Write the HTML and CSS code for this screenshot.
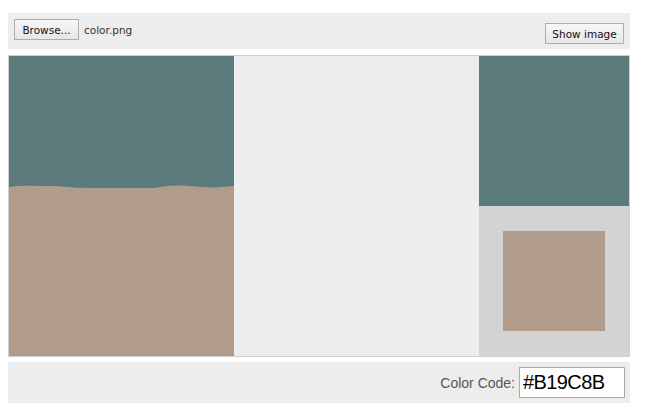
FILE: index.html
```html
<!DOCTYPE html>
<html lang="en">
<head>
    <meta charset="UTF-8">
    <title>Color Picker</title>
    <link rel="stylesheet" href="styles.css">
</head>
<body>
<div class="toolbar">
    <div class="file-group">
        <button class="btn">Browse...</button>
        <span class="file-name">color.png</span>
    </div>
    <button class="btn show-btn">Show image</button>
</div>

<div class="viewer">
    <div class="image-box">
        <svg width="225" height="300" viewBox="0 0 225 300">
            <rect width="225" height="300" fill="#5b7a7b"/>
            <path d="M0 131 C10 129 30 130 45 130 C60 131 70 132 85 132 L145 132 C155 130 165 129 180 130 C195 131 205 132 212 131 L225 130 L225 300 L0 300 Z" fill="#b19c8b"/>
        </svg>
    </div>
    <div class="spacer"></div>
    <div class="preview">
        <div class="preview-top"></div>
        <div class="preview-bottom">
            <div class="swatch"></div>
        </div>
    </div>
</div>

<div class="footer">
    <label class="code-label" for="colorCode">Color Code:</label>
    <input type="text" id="colorCode" class="code-input" value="#B19C8B">
</div>
</body>
</html>
```

FILE: styles.css
```css
body {
    margin: 8px;
    font-family: "Liberation Sans", Arial, sans-serif;
    background-color: #fff;
    color: #333;
}
.toolbar {
    margin-top: 5px;
    width: 622px;
    height: 36px;
    background-color: #ededed;
    display: flex;
    justify-content: space-between;
    box-sizing: border-box;
    padding: 6px 6px 5px 6px;
}
.file-group {
    display: flex;
    align-items: center;
    align-self: flex-start;
    gap: 5px;
}
.btn {
    width: 65px;
    height: 21px;
    padding: 0;
    font-family: "DejaVu Sans", sans-serif;
    font-size: 10.5px;
    color: #111;
    background: linear-gradient(#f7f7f7, #e6e6e6);
    border: 1px solid #adadad;
    border-radius: 0;
}
.show-btn {
    align-self: flex-end;
    width: 79px;
}
.file-name {
    font-family: "DejaVu Sans", sans-serif;
    font-size: 10.5px;
    color: #333;
}
.viewer {
    margin-top: 6px;
    width: 622px;
    height: 302px;
    box-sizing: border-box;
    border: 1px solid #cfcfcf;
    display: flex;
    background-color: #ededed;
}
.image-box {
    width: 225px;
    height: 300px;
}
.image-box svg {
    display: block;
}
.spacer {
    flex: 1;
}
.preview {
    width: 150px;
    display: flex;
    flex-direction: column;
}
.preview-top {
    height: 150px;
    background-color: #5b7a7b;
}
.preview-bottom {
    flex: 1;
    background-color: #d3d3d3;
    display: flex;
    align-items: center;
    justify-content: center;
}
.swatch {
    width: 102px;
    height: 100px;
    background-color: #b19c8b;
}
.footer {
    margin-top: 5px;
    width: 622px;
    height: 41px;
    background-color: #ededed;
    display: flex;
    align-items: center;
    justify-content: flex-end;
    padding-right: 5px;
    box-sizing: border-box;
    gap: 4px;
}
.code-label {
    font-size: 14px;
    color: #555;
}
.code-input {
    width: 106px;
    height: 31px;
    box-sizing: border-box;
    border: 1px solid #a9a9a9;
    padding: 0 3px;
    font-family: "Liberation Sans", Arial, sans-serif;
    font-size: 20px;
    letter-spacing: -0.6px;
    color: #000;
    background: #fff;
}
```
